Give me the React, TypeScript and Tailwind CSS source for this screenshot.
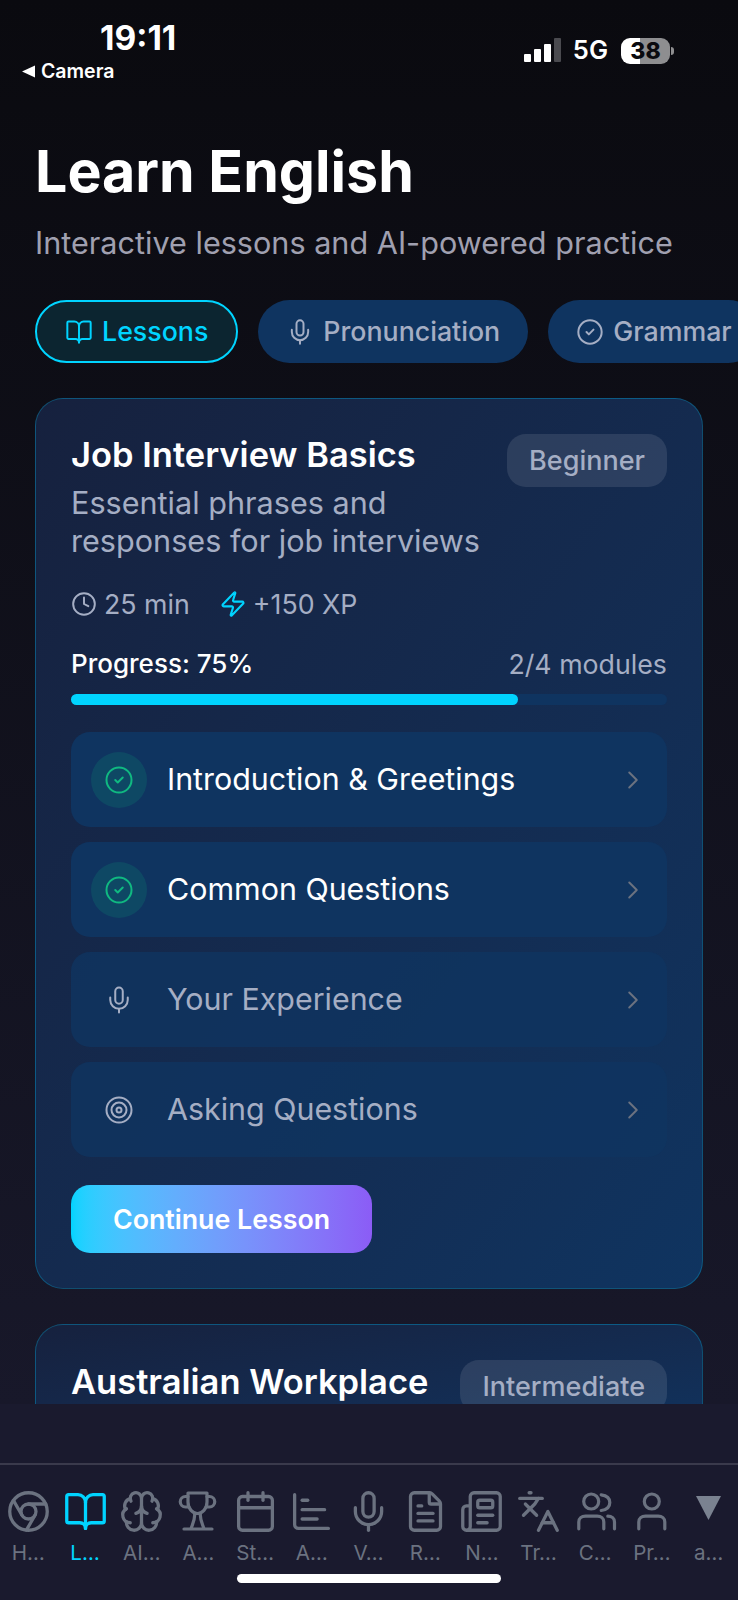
import React from 'react';
import {
  BookOpen, Brain, ChartBar, ChevronRight, Chrome, CircleCheck, Calendar, Clock, FileText,
  Languages, Mic, Newspaper, Target, Zap,
} from 'lucide-react';

type IconProps = { className?: string; strokeWidth?: number };

// the nav's trophy and people glyphs differ from lucide's, so they are drawn here
function NavSvg({ className, children }: { className?: string; children: React.ReactNode }) {
  return (
    <svg className={className} viewBox="0 0 45 45" fill="none" stroke="currentColor" strokeWidth="3.2" strokeLinecap="round" strokeLinejoin="round">
      {children}
    </svg>
  );
}

function TrophyIcon({ className }: IconProps) {
  return (
    <NavSvg className={className}>
      <path d="M12 4H31V13C31 20 26 24.5 21.5 24.5C17 24.5 12 20 12 13Z" />
      <path d="M18.5 24C19.5 30 17 34 15 39.5M24.5 24C23.5 30 26 34 28 39.5M8 40H36" />
      <path d="M12 7.5H9.5A5 5 0 0 0 9.5 18H13M31 7.5H33.5A5 5 0 0 1 33.5 18H30" />
    </NavSvg>
  );
}

function PeopleIcon({ className }: IconProps) {
  return (
    <NavSvg className={className}>
      <circle cx="18.2" cy="12.5" r="7.5" />
      <path d="M28.2 5.8C34 6.5 36.8 9.5 36.8 13.5C36.8 17.5 34 20.8 28.2 21.5" />
      <path d="M5.8 39.8V33C5.8 29.5 8.5 27.2 12.5 27.2H24.2C28 27.2 30.8 29.5 30.8 33V39.8" />
      <path d="M34.8 27.2C38.8 27.2 41.5 29.5 41.5 33V39.8" />
    </NavSvg>
  );
}

function PersonIcon({ className }: IconProps) {
  return (
    <NavSvg className={className}>
      <circle cx="22.8" cy="12.5" r="7.5" />
      <path d="M9.8 39.8V33C9.8 29.5 12.5 27.2 16.5 27.2H29.2C33 27.2 35.8 29.5 35.8 33V39.8" />
    </NavSvg>
  );
}

const modules = [
  { title: 'Introduction & Greetings', done: true, Icon: CircleCheck },
  { title: 'Common Questions', done: true, Icon: CircleCheck },
  { title: 'Your Experience', done: false, Icon: Mic },
  { title: 'Asking Questions', done: false, Icon: Target },
];

const navItems = [
  { label: 'H…', Icon: Chrome },
  { label: 'L…', Icon: BookOpen, active: true },
  { label: 'AI…', Icon: Brain },
  { label: 'A…', Icon: TrophyIcon },
  { label: 'St…', Icon: Calendar },
  { label: 'A…', Icon: ChartBar },
  { label: 'V…', Icon: Mic },
  { label: 'R…', Icon: FileText },
  { label: 'N…', Icon: Newspaper },
  { label: 'Tr…', Icon: Languages },
  { label: 'C…', Icon: PeopleIcon },
  { label: 'Pr…', Icon: PersonIcon },
];

function StatusBar() {
  return (
    <div className="flex justify-between pt-[21px] pl-[22px] pr-[64px] h-[90px] text-white">
      <div className="flex flex-col">
        <span className="ml-[78px] text-[33.5px] leading-[34px] font-bold">19:11</span>
        <div className="flex items-center gap-[6px] mt-[4px]">
          <svg width="13" height="13" viewBox="0 0 13 13"><polygon points="0,6.5 13,0.5 13,12.5" fill="#fff" /></svg>
          <span className="text-[19.5px] leading-[24px] font-semibold">Camera</span>
        </div>
      </div>
      <div className="flex items-end h-[42px]">
        <div className="flex items-end gap-[3px] mb-[1px]">
          <div className="w-[7px] h-[8px] rounded-[1px] bg-white" />
          <div className="w-[7px] h-[13px] rounded-[1px] bg-white" />
          <div className="w-[7px] h-[18px] rounded-[1px] bg-white" />
          <div className="w-[7px] h-[24px] rounded-[1px] bg-[#4a4a4f]" />
        </div>
        <span className="ml-[12px] text-[25.5px] leading-[26px] font-semibold">5G</span>
        <div className="relative ml-[13px] w-[49px] h-[26px] rounded-[9px] bg-[linear-gradient(to_right,#ffffff_19px,#8e8e90_19px)] mb-[-1px]">
          <span className="flex items-center justify-center h-full text-[23px] leading-[26px] font-extrabold text-[#0a0a0f]">38</span>
        </div>
        <div className="w-[3px] h-[8px] ml-[1px] mb-[8px] rounded-r-full bg-[#8e8e90]" />
      </div>
    </div>
  );
}

function Tab({ label, Icon, active }: { label: string; Icon: typeof Mic; active?: boolean }) {
  return (
    <div
      className={`flex items-center shrink-0 gap-[9px] h-[63px] px-[28px] rounded-full text-[26.75px] font-medium ${
        active ? 'bg-[#0c2530] border-2 border-[#00d4ff] text-[#00d4ff]' : 'bg-[#0f3460] text-[#a5aec4]'
      }`}
    >
      <Icon className="w-[28px] h-[28px]" strokeWidth={1.7} />
      {label}
    </div>
  );
}

function Module({ title, done, Icon }: { title: string; done: boolean; Icon: typeof Mic }) {
  return (
    <div className={`flex items-center h-[95px] pl-[20px] pr-[19px] rounded-[19px] ${done ? 'bg-[#0f3460]' : 'bg-[#0f3460]/80'}`}>
      <div className={`flex items-center justify-center w-[56px] h-[56px] rounded-full ${done ? 'bg-[#10b981]/15' : ''}`}>
        <Icon className={`w-[30px] h-[30px] ${done ? 'text-[#10b981]' : 'text-[#a5aec4]'}`} strokeWidth={1.6} />
      </div>
      <span className={`flex-1 ml-[20px] text-[30.4px] ${done ? 'text-white' : 'text-[#a5aec4]'}`}>{title}</span>
      <ChevronRight className="w-[30px] h-[30px] text-[#6b7280]" strokeWidth={1.6} />
    </div>
  );
}

export default function App() {
  return (
    <div className="flex flex-col w-[738px] h-[1600px] overflow-hidden bg-gradient-to-b from-[#0a0a0f] to-[#1a1a2e] font-['Inter',sans-serif]">
      <div className="h-[1404px] shrink-0 overflow-hidden">
        <StatusBar />
        <div className="pl-[35px] pt-[50px]">
          <h1 className="text-[57.3px] leading-[62px] font-bold text-white">Learn English</h1>
          <p className="mt-[22px] text-[30.6px] leading-[38px] text-[#a0a0b0]">Interactive lessons and AI-powered practice</p>

          <div className="flex gap-[20px] mt-[38px]">
            <Tab label="Lessons" Icon={BookOpen} active />
            <Tab label="Pronunciation" Icon={Mic} />
            <Tab label="Grammar" Icon={CircleCheck} />
          </div>

          <div className="w-[668px] mt-[35px] p-[35px] rounded-[28px] border border-[#00d4ff]/25 bg-gradient-to-br from-[#16213e] to-[#0f3460]">
            <div className="flex justify-between items-start">
              <div>
                <h2 className="mt-[1px] text-[34.5px] leading-[40px] font-semibold text-white">Job Interview Basics</h2>
                <p className="w-[430px] mt-[9px] text-[30.6px] leading-[38px] text-[#a5aec4]">Essential phrases and responses for job interviews</p>
              </div>
              <span className="px-[22px] py-[11px] rounded-[19px] bg-white/10 text-[27px] leading-[31px] font-medium text-[#a5aec4]">Beginner</span>
            </div>

            <div className="flex items-center mt-[28px] text-[26.75px] leading-[32px] text-[#a5aec4]">
              <Clock className="w-[26px] h-[26px] mr-[7px]" strokeWidth={1.8} />
              25 min
              <Zap className="w-[28px] h-[28px] ml-[29px] mr-[6px] text-[#00d4ff]" strokeWidth={1.8} />
              +150 XP
            </div>

            <div className="flex justify-between mt-[28px] text-[26.75px] leading-[32px]">
              <span className="text-[26px] font-medium text-white">Progress: 75%</span>
              <span className="text-[#a5aec4]">2/4 modules</span>
            </div>
            <div className="h-[11px] mt-[14px] rounded-full bg-[#0f3460]">
              <div className="h-full w-3/4 rounded-full bg-[#00d4ff]" />
            </div>

            <div className="flex flex-col gap-[15px] mt-[27px]">
              {modules.map((m) => (
                <Module key={m.title} {...m} />
              ))}
            </div>

            <button className="block w-[301px] h-[68px] mt-[28px] rounded-[19px] bg-gradient-to-r from-[#00d4ff] to-[#8b5cf6] text-[26.75px] font-semibold text-white">
              Continue Lesson
            </button>
          </div>

          <div className="w-[668px] mt-[35px] p-[35px] rounded-t-[28px] border border-[#00d4ff]/25 bg-gradient-to-br from-[#16213e] to-[#0f3460]">
            <div className="flex justify-between items-start">
              <h2 className="mt-[2px] text-[34.5px] leading-[40px] font-semibold text-white">Australian Workplace</h2>
              <span className="px-[22px] py-[11px] rounded-[19px] bg-white/10 text-[27px] leading-[31px] font-medium text-[#a5aec4]">Intermediate</span>
            </div>
          </div>
        </div>
      </div>

      <div className="flex-1 bg-[#1a1a2e] pt-[59px]">
        <div className="border-t-2 border-[#3a3a4c] pt-[24px]">
          <div className="grid grid-cols-[repeat(13,56.7px)]">
            {navItems.map(({ label, Icon, active }, i) => (
              <div key={i} className={`flex flex-col items-center ${active ? 'text-[#00d4ff]' : 'text-[#6b7280]'}`}>
                <Icon className="w-[45px] h-[45px]" strokeWidth={1.75} />
                <span className="mt-[6px] text-[20.6px] leading-[26px]">{label}</span>
              </div>
            ))}
            <div className="flex flex-col items-center text-[#6b7280]">
              <div className="h-[45px] flex items-center">
                <svg className="mb-[8px]" width="25" height="24" viewBox="0 0 25 24"><polygon points="0,0 25,0 12.5,24" fill="#7a8290" /></svg>
              </div>
              <span className="mt-[6px] text-[20.6px] leading-[26px]">a…</span>
            </div>
          </div>
        </div>
        <div className="w-[264px] h-[9px] mx-auto mt-[8px] rounded-full bg-white" />
      </div>
    </div>
  );
}
